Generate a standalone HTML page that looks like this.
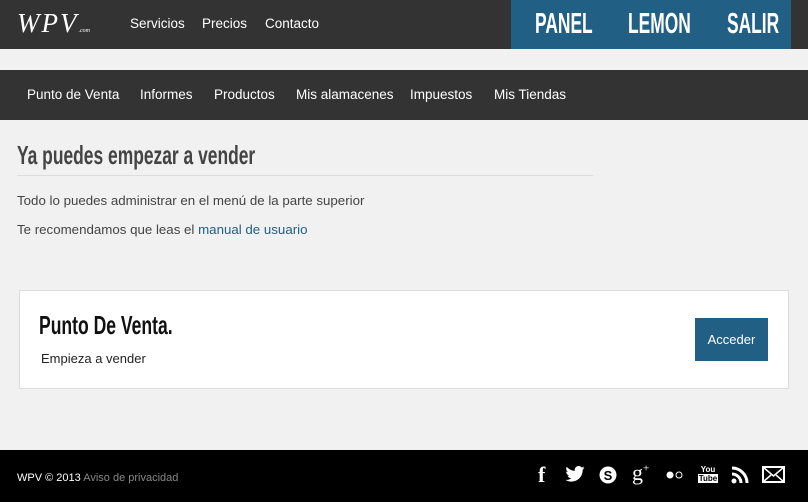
<!DOCTYPE html>
<html><head><meta charset="utf-8"><style>
*{margin:0;padding:0;box-sizing:border-box}
body{width:808px;height:502px;background:#f1f1f1;font-family:"Liberation Sans",sans-serif;position:relative;overflow:hidden}
.top{position:absolute;left:0;top:0;width:808px;height:49px;background:#333}
.logo{position:absolute;left:17px;top:8px;color:#fff;font-family:"Liberation Serif",serif;font-style:italic;font-size:27px;letter-spacing:2px}
.logo small{font-size:6px;letter-spacing:0}
.tn{position:absolute;top:16px;color:#fff;font-size:13.5px}
.blue{position:absolute;left:511px;top:0;width:280px;height:49px;background:#215f84}
.cond{font-family:"Liberation Sans Narrow","Liberation Sans",sans-serif;font-weight:bold;display:inline-block;transform-origin:0 0}
.bl{position:absolute;top:8px;color:#fff;font-size:29px;transform:scaleX(.6)}
.nav{position:absolute;left:0;top:70px;width:808px;height:50px;background:#333}
.nav span{position:absolute;top:17px;color:#fff;font-size:13.5px}
h1{position:absolute;left:17px;top:140px;font-size:26px;color:#444;transform:scaleX(.67);white-space:nowrap}
.hr{position:absolute;left:17px;top:175px;width:576px;height:1px;background:#ddd}
p{position:absolute;left:17px;font-size:13.3px;color:#444}
a{color:#215f84;text-decoration:none}
.card{position:absolute;left:19px;top:290px;width:770px;height:99px;background:#fff;border:1px solid #ddd}
.ct{position:absolute;left:19px;top:19px;font-size:26px;color:#111;transform:scaleX(.675);white-space:nowrap}
.cs{position:absolute;left:21px;top:60px;font-size:13px;color:#222}
.btn{position:absolute;left:675px;top:27px;width:73px;height:43px;background:#215f84;color:#fff;font-size:13px;text-align:center;line-height:43px}
.foot{position:absolute;left:0;top:450px;width:808px;height:52px;background:#000}
.ft{position:absolute;left:17px;top:22px;color:#fff;font-size:11px}
.ft span{color:#888}
.ic{position:absolute;top:13px;color:#fff;font-weight:bold}
</style></head><body>
<div class="top">
<div class="logo">WPV<small>.com</small></div>
<span class="tn" style="left:130px">Servicios</span>
<span class="tn" style="left:202px">Precios</span>
<span class="tn" style="left:265px">Contacto</span>
<div class="blue">
<span class="cond bl" style="left:24px">PANEL</span>
<span class="cond bl" style="left:117px">LEMON</span>
<span class="cond bl" style="left:216px">SALIR</span>
</div>
</div>
<div class="nav">
<span style="left:27px">Punto de Venta</span>
<span style="left:140px">Informes</span>
<span style="left:214px">Productos</span>
<span style="left:296px">Mis alamacenes</span>
<span style="left:410px">Impuestos</span>
<span style="left:494px">Mis Tiendas</span>
</div>
<h1 class="cond">Ya puedes empezar a vender</h1>
<div class="hr"></div>
<p style="top:193px">Todo lo puedes administrar en el menú de la parte superior</p>
<p style="top:222px">Te recomendamos que leas el <a>manual de usuario</a></p>
<div class="card">
<span class="cond ct">Punto De Venta.</span>
<div class="cs">Empieza a vender</div>
<div class="btn">Acceder</div>
</div>
<div class="foot">
<div class="ft">WPV © 2013 <span>Aviso de privacidad</span></div>
<span class="ic" style="left:538px;top:12px;font-size:22px;font-family:'Liberation Serif'">f</span>
<svg class="ic" style="left:565px;top:16px" width="20" height="16" viewBox="0 0 24 20"><path fill="#fff" d="M24 2.5c-.9.4-1.8.6-2.8.8 1-.6 1.8-1.6 2.2-2.7-1 .6-2 1-3.1 1.2C19.4.7 18.1 0 16.6 0c-2.7 0-4.9 2.2-4.9 4.9 0 .4 0 .8.1 1.1C7.7 5.8 4.1 3.900 1.7.9c-.4.7-.7 1.6-.7 2.5 0 1.7.9 3.2 2.2 4.1-.8 0-1.6-.2-2.2-.6v.1c0 2.4 1.7 4.4 3.9 4.8-.4.1-.8.2-1.3.2-.3 0-.6 0-.9-.1.6 2 2.4 3.4 4.600 3.4-1.700 1.300-3.800 2.100-6.100 2.100-.4 0-.8 0-1.2-.1 2.2 1.4 4.8 2.2 7.5 2.2 9.1 0 14-7.5 14-14v-.6c1-.7 1.8-1.6 2.5-2.6z"/></svg>
<svg class="ic" style="left:599px;top:16px" width="18" height="18" viewBox="0 0 18 18"><circle cx="9" cy="9" r="8.5" fill="#fff"/><text x="9" y="14" font-size="13" font-weight="bold" text-anchor="middle" fill="#000" font-family="Liberation Sans">S</text></svg>
<span class="ic" style="left:632px;top:10px;font-size:22px;font-family:'Liberation Serif';font-weight:normal">g<sup style="font-size:11px">+</sup></span>
<svg class="ic" style="left:666px;top:21px" width="18" height="8"><circle cx="4" cy="4" r="3.5" fill="#fff"/><circle cx="13" cy="4" r="3" fill="none" stroke="#fff" stroke-width="1"/></svg>
<div class="ic" style="left:698px;top:15px;width:20px;font-size:8px;line-height:9px;text-align:center">You<div style="background:#fff;color:#000">Tube</div></div>
<svg class="ic" style="left:731px;top:16px" width="18" height="18" viewBox="0 0 18 18"><circle cx="3" cy="15" r="2.5" fill="#fff"/><path d="M1 8a9 9 0 0 1 9 9M1 2a15 15 0 0 1 15 15" stroke="#fff" stroke-width="3" fill="none"/></svg>
<svg class="ic" style="left:762px;top:16px" width="23" height="17"><rect x="1" y="1" width="21" height="15" fill="none" stroke="#fff" stroke-width="2"/><path d="M1 1l10.5 9L22 1M1 16l8-7M22 16l-8-7" stroke="#fff" stroke-width="1.5" fill="none"/></svg>
</div>
</body></html>
